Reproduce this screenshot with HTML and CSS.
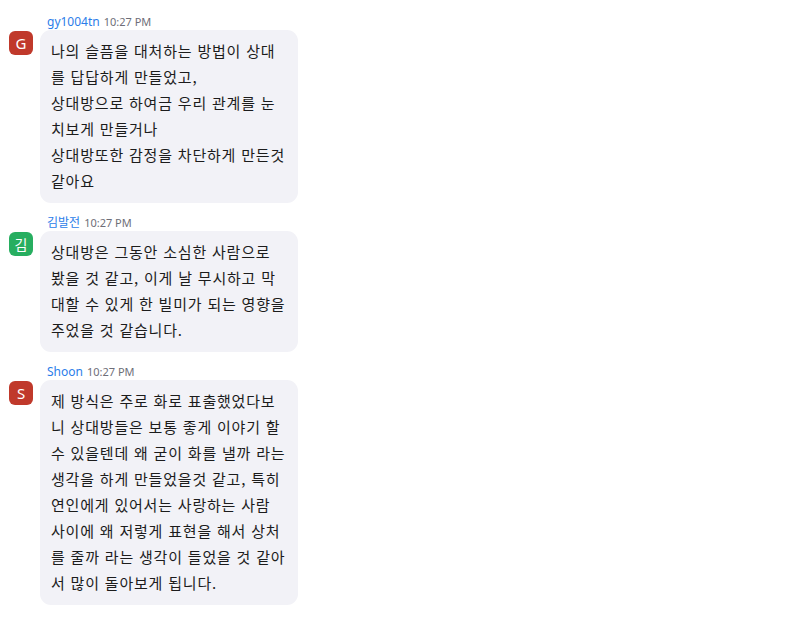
FILE: index.html
```html
<!DOCTYPE html>
<html lang="ko">
<head>
  <meta charset="UTF-8">
  <title>Chat</title>
  <link rel="stylesheet" href="styles.css">
</head>
<body>

  <div id="chat">
    <div class="msg">
      <div class="avatar red">G</div>
      <div class="msg-body">
        <div class="meta"><span class="name">gy1004tn</span><span class="time">10:27 PM</span></div>
        <div class="bubble">나의 슬픔을 대처하는 방법이 상대를 답답하게 만들었고,<br>상대방으로 하여금 우리 관계를 눈치보게 만들거나<br>상대방또한 감정을 차단하게 만든것 같아요</div>
      </div>
    </div>

    <div class="msg">
      <div class="avatar green">김</div>
      <div class="msg-body">
        <div class="meta"><span class="name">김발전</span><span class="time">10:27 PM</span></div>
        <div class="bubble">상대방은 그동안 소심한 사람으로 봤을 것 같고, 이게 날 무시하고 막대할 수 있게 한 빌미가 되는 영향을 주었을 것 같습니다.</div>
      </div>
    </div>

    <div class="msg">
      <div class="avatar red">S</div>
      <div class="msg-body">
        <div class="meta"><span class="name">Shoon</span><span class="time">10:27 PM</span></div>
        <div class="bubble">제 방식은 주로 화로 표출했었다보니 상대방들은 보통 좋게 이야기 할 수 있을텐데 왜 굳이 화를 낼까 라는 생각을 하게 만들었을것 같고, 특히 연인에게 있어서는 사랑하는 사람 사이에 왜 저렇게 표현을 해서 상처를 줄까 라는 생각이 들었을 것 같아서 많이 돌아보게 됩니다.</div>
      </div>
    </div>
  </div>

</body>
</html>
```

FILE: styles.css
```css
body {
  margin: 0;
  background: #fff;
  color: #1c1c1c;
  font-family: "Noto Sans", "Noto Sans CJK KR", sans-serif;
}
#chat {
  display: flex;
  flex-direction: column;
  gap: 11px;
  padding: 13px 0 0 9px;
}
.msg {
  display: flex;
  gap: 7px;
  align-items: flex-start;
}
.avatar {
  width: 24px;
  height: 24px;
  margin-top: 18px;
  border-radius: 6px;
  color: #fff;
  font-size: 15px;
  line-height: 24px;
  text-align: center;
  flex-shrink: 0;
}
.avatar.red {
  background-color: #c0392b;
}
.avatar.green {
  background-color: #27ae60;
  font-family: "Noto Sans CJK KR", sans-serif;
  font-size: 14px;
}
.msg-body {
  display: flex;
  flex-direction: column;
  gap: 3px;
}
.meta {
  padding-left: 7px;
  height: 14px;
  line-height: 14px;
  white-space: nowrap;
}
.name {
  color: #2b7de9;
  font-size: 12px;
  margin-right: 4px;
}
.time {
  color: #6e6e78;
  font-size: 11px;
}
.bubble {
  box-sizing: border-box;
  width: 258px;
  padding: 8px 10px 9px 11px;
  background-color: #f2f2f7;
  border-radius: 11px;
  font-family: "Noto Sans CJK KR", sans-serif;
  font-size: 15px;
  line-height: 26px;
  letter-spacing: 0.8px;
}
```
